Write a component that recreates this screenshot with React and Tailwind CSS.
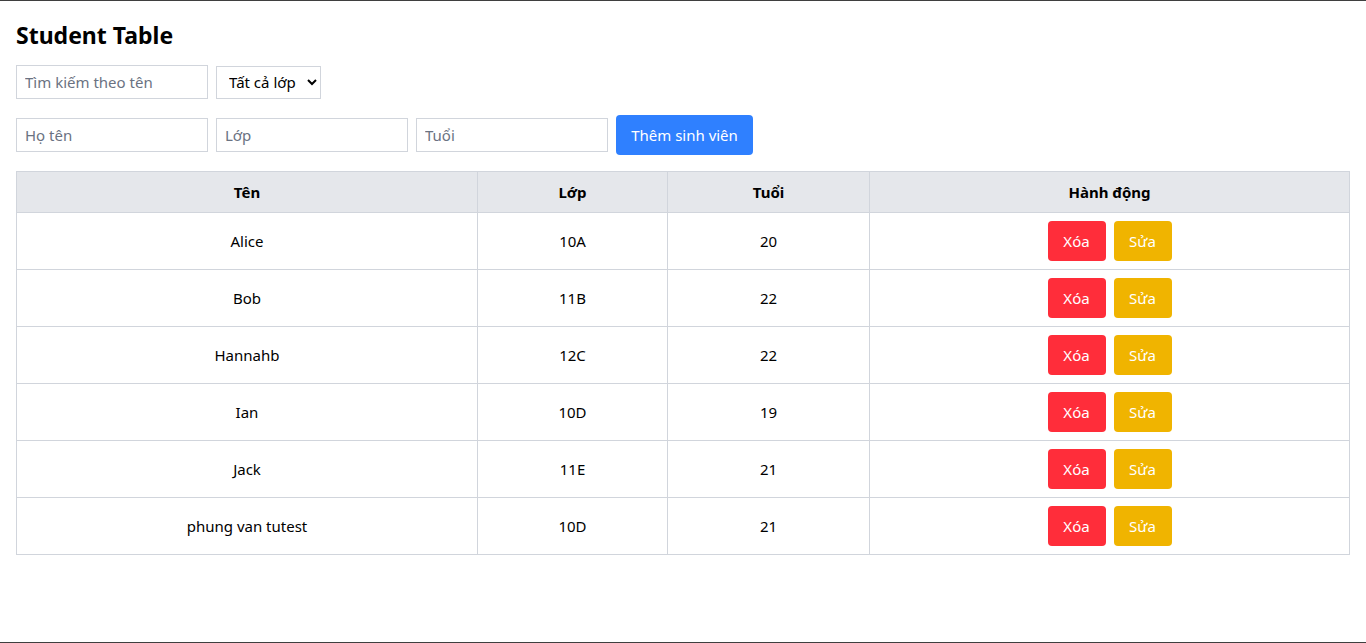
const students = [
  { name: "Alice", cls: "10A", age: 20 },
  { name: "Bob", cls: "11B", age: 22 },
  { name: "Hannahb", cls: "12C", age: 22 },
  { name: "Ian", cls: "10D", age: 19 },
  { name: "Jack", cls: "11E", age: 21 },
  { name: "phung van tutest", cls: "10D", age: 21 },
];

function App() {
  return (
    <div
      className="h-[643px] bg-white text-black border-t border-b border-[#3f3f3f] px-4 pt-[18px] text-[15px]"
      style={{ fontFamily: '"Noto Sans", "Open Sans", sans-serif' }}
    >
      <h1 className="text-[23px] font-bold leading-8 mb-[14px]">Student Table</h1>

      <div className="flex items-center gap-2">
        <input
          className="w-48 h-[34px] border border-gray-300 px-2 outline-none placeholder:text-gray-500"
          placeholder="Tìm kiếm theo tên"
        />
        <select className="h-[33px] w-[105px] border border-gray-300 px-2 bg-white">
          <option>Tất cả lớp</option>
        </select>
      </div>

      <div className="flex items-center gap-2 mt-4">
        <input
          className="w-48 h-[34px] border border-gray-300 px-2 outline-none placeholder:text-gray-500"
          placeholder="Họ tên"
        />
        <input
          className="w-48 h-[34px] border border-gray-300 px-2 outline-none placeholder:text-gray-500"
          placeholder="Lớp"
        />
        <input
          className="w-48 h-[34px] border border-gray-300 px-2 outline-none placeholder:text-gray-500"
          placeholder="Tuổi"
        />
        <button className="h-10 w-[137px] rounded bg-[#2f80ff] text-white">
          Thêm sinh viên
        </button>
      </div>

      <table className="w-full mt-4 border-collapse border border-gray-300 text-center">
        <thead>
          <tr className="bg-gray-200">
            <th className="w-[461px] border border-gray-300 py-[9px] leading-[22px] font-bold">Tên</th>
            <th className="w-[190px] border border-gray-300 py-[9px] leading-[22px] font-bold">Lớp</th>
            <th className="w-[202px] border border-gray-300 py-[9px] leading-[22px] font-bold">Tuổi</th>
            <th className="border border-gray-300 py-[9px] leading-[22px] font-bold">Hành động</th>
          </tr>
        </thead>
        <tbody>
          {students.map((s) => (
            <tr key={s.name}>
              <td className="border border-gray-300 py-2">{s.name}</td>
              <td className="border border-gray-300 py-2">{s.cls}</td>
              <td className="border border-gray-300 py-2">{s.age}</td>
              <td className="border border-gray-300 py-2">
                <div className="flex justify-center gap-2">
                  <button className="w-[58px] h-10 rounded bg-[#ff2d3a] text-white">Xóa</button>
                  <button className="w-[58px] h-10 rounded bg-[#f0b400] text-white">Sửa</button>
                </div>
              </td>
            </tr>
          ))}
        </tbody>
      </table>
    </div>
  );
}

export default App;
